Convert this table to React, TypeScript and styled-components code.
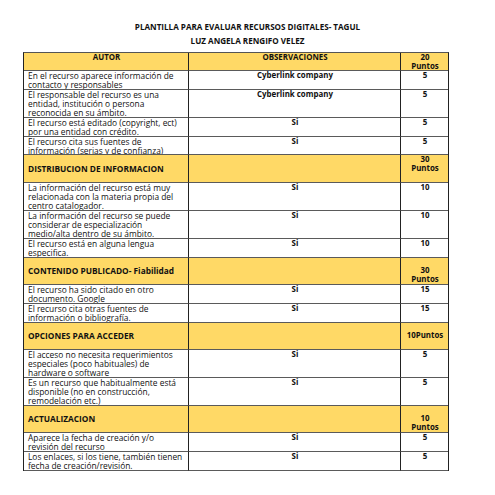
import React from "react";
import styled, { createGlobalStyle } from "styled-components";

const Global = createGlobalStyle`
  html, body { margin: 0; padding: 0; background: #ffffff; }
  body { font-family: "Open Sans", Lato, "Liberation Sans", sans-serif; color: #111; }
`;

const Page = styled.div`
  width: 495px;
  height: 495px;
  padding-top: 22px;
  box-sizing: border-box;
  display: flex;
  flex-direction: column;
  align-items: center;
`;

const Title = styled.div<{ $gap: number }>`
  font-weight: 700;
  font-size: 8.1px;
  line-height: 10px;
  height: 10px;
  white-space: nowrap;
  margin-bottom: ${(p) => p.$gap}px;
`;

const Grid = styled.div`
  width: 424px;
  margin-left: -23px;
  display: grid;
  grid-template-columns: 165px 212px 47px;
  border-left: 1px solid #222;
  border-right: 1px solid #222;
  border-top: 1px solid #555;
`;

const Cell = styled.div<{
  $yellow?: boolean;
  $bold?: boolean;
  $size?: number;
  $align?: "left" | "center";
  $v?: "start" | "center" | "end";
  $last?: boolean;
  $h: number;
}>`
  box-sizing: border-box;
  height: ${(p) => p.$h}px;
  background: ${(p) => (p.$yellow ? "#FFD966" : "#ffffff")};
  font-weight: ${(p) => (p.$bold ? 700 : 400)};
  font-size: ${(p) => p.$size ?? (p.$bold ? 7.9 : 8.4)}px;
  line-height: 9.2px;
  text-align: ${(p) => p.$align ?? "left"};
  padding: 0 3px 0 4px;
  border-bottom: 1px solid #5a5a5a;
  border-right: ${(p) => (p.$last ? "none" : "1px solid #222")};
  display: flex;
  flex-direction: column;
  justify-content: ${(p) =>
    p.$v === "center" ? "center" : p.$v === "end" ? "flex-end" : "flex-start"};
  overflow: hidden;
`;

const Line = styled.span`
  display: block;
  white-space: nowrap;
`;

type Row =
  | { kind: "data"; desc: string[]; obs: string; pts: string; h: number }
  | { kind: "section"; title: string; pts: string[]; v: "start" | "center" | "end"; h: number };

const rows: Row[] = [
  { kind: "data", desc: ["En el recurso aparece información de", "contacto y responsables"], obs: "Cyberlink company", pts: "5", h: 19 },
  { kind: "data", desc: ["El responsable del recurso es una", "entidad, institución o persona", "reconocida en su ámbito."], obs: "Cyberlink company", pts: "5", h: 28 },
  { kind: "data", desc: ["El recurso está editado (copyright, ect)", "por una entidad con crédito."], obs: "Si", pts: "5", h: 19 },
  { kind: "data", desc: ["El recurso cita sus fuentes de", "información (serias y de confianza)"], obs: "Si", pts: "5", h: 18 },
  { kind: "section", title: "DISTRIBUCION DE INFORMACION", pts: ["30", "Puntos"], v: "start", h: 28 },
  { kind: "data", desc: ["La información del recurso está muy", "relacionada con la materia propia del", "centro catalogador."], obs: "Si", pts: "10", h: 28 },
  { kind: "data", desc: ["La información del recurso se puede", "considerar de especialización", "medio/alta dentro de su ámbito."], obs: "Si", pts: "10", h: 28 },
  { kind: "data", desc: ["El recurso está en alguna lengua", "especifica."], obs: "Si", pts: "10", h: 19 },
  { kind: "section", title: "CONTENIDO PUBLICADO- Fiabilidad", pts: ["30", "Puntos"], v: "end", h: 27 },
  { kind: "data", desc: ["El recurso ha sido citado en otro", "documento. Google"], obs: "Si", pts: "15", h: 19 },
  { kind: "data", desc: ["El recurso cita otras fuentes de", "información o bibliografía."], obs: "Si", pts: "15", h: 19 },
  { kind: "section", title: "OPCIONES PARA ACCEDER", pts: ["10Puntos"], v: "center", h: 27 },
  { kind: "data", desc: ["El acceso no necesita requerimientos", "especiales (poco habituales) de", "hardware o software"], obs: "Si", pts: "5", h: 28 },
  { kind: "data", desc: ["Es un recurso que habitualmente está", "disponible (no en construcción,", "remodelación etc.)"], obs: "Si", pts: "5", h: 28 },
  { kind: "section", title: "ACTUALIZACION", pts: ["10", "Puntos"], v: "end", h: 27 },
  { kind: "data", desc: ["Aparece la fecha de creación y/o", "revisión del recurso"], obs: "Si", pts: "5", h: 19 },
  { kind: "data", desc: ["Los enlaces, si los tiene, también tienen", "fecha de creación/revisión."], obs: "Si", pts: "5", h: 19 },
];

export default function App() {
  return (
    <>
      <Global />
      <Page>
        <Title $gap={4}>PLANTILLA PARA EVALUAR RECURSOS DIGITALES- TAGUL</Title>
        <Title $gap={6}>LUZ ANGELA RENGIFO VELEZ</Title>
        <Grid>
          <Cell $yellow $bold $align="center" $h={18}>
            <Line>AUTOR</Line>
          </Cell>
          <Cell $yellow $bold $align="center" $h={18}>
            <Line>OBSERVACIONES</Line>
          </Cell>
          <Cell $yellow $bold $align="center" $last $h={18}>
            <Line>20</Line>
            <Line>Puntos</Line>
          </Cell>
          {rows.map((r, i) =>
            r.kind === "data" ? (
              <React.Fragment key={i}>
                <Cell $h={r.h}>
                  {r.desc.map((d, j) => (
                    <Line key={j}>{d}</Line>
                  ))}
                </Cell>
                <Cell $bold $align="center" $h={r.h}>
                  <Line>{r.obs}</Line>
                </Cell>
                <Cell $bold $align="center" $last $h={r.h}>
                  <Line>{r.pts}</Line>
                </Cell>
              </React.Fragment>
            ) : (
              <React.Fragment key={i}>
                <Cell $yellow $bold $size={8.3} $v="center" $h={r.h}>
                  <Line>{r.title}</Line>
                </Cell>
                <Cell $yellow $h={r.h} />
                <Cell $yellow $bold $align="center" $v={r.v} $last $h={r.h}>
                  {r.pts.map((p, j) => (
                    <Line key={j}>{p}</Line>
                  ))}
                </Cell>
              </React.Fragment>
            )
          )}
        </Grid>
      </Page>
    </>
  );
}
